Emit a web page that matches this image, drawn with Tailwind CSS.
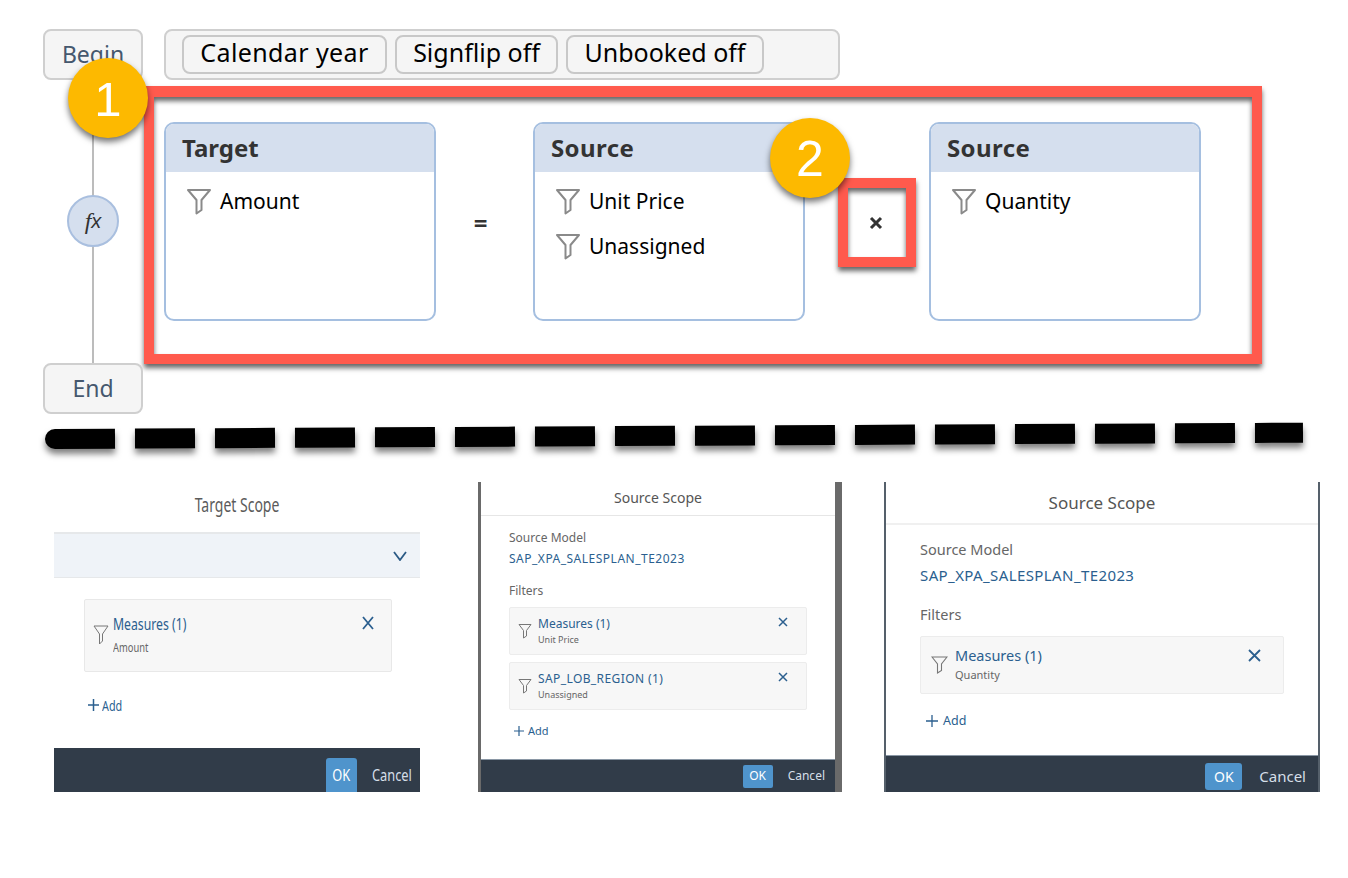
<!doctype html>
<html><head><meta charset="utf-8">
<script src="https://cdn.jsdelivr.net/npm/@tailwindcss/browser@4"></script>
</head>
<body class="m-0 bg-white">
<div class="relative w-[1348px] h-[878px] overflow-hidden bg-white font-['Noto_Sans','Open_Sans',sans-serif]">

  <!-- connector -->
  <div class="absolute left-[92px] top-[80px] w-[2px] h-[284px] bg-[#bcbcbc]"></div>
  <div class="absolute left-[67px] top-[195px] w-[52px] h-[52px] rounded-full border-2 border-[#a9bfdf] bg-[#d5dfee] flex items-center justify-center italic text-[#333]"><span class="font-['Liberation_Serif',serif] text-[24px]">f</span><span class="font-['Liberation_Sans',sans-serif] text-[20px]">x</span></div>

  <!-- top row -->
  <div class="relative flex pt-[29px] pl-[43px] gap-[21px]">
    <div class="w-[100px] h-[51px] rounded-[8px] border-2 border-[#cfcfcf] bg-[#f5f5f5] flex items-center justify-center text-[23px] text-[#45586e]">Begin</div>
    <div class="w-[676px] h-[51px] rounded-[8px] border-2 border-[#cfcfcf] bg-[#f5f5f5] flex items-center gap-[8px] pl-[16px] text-[25px] text-black">
      <div class="w-[205px] h-[39px] rounded-[8px] border-2 border-[#c8c8c8] flex items-center justify-center pb-[3px] tracking-[0.4px]">Calendar year</div>
      <div class="w-[163px] h-[39px] rounded-[8px] border-2 border-[#c8c8c8] flex items-center justify-center pb-[3px]">Signflip off</div>
      <div class="w-[198px] h-[39px] rounded-[8px] border-2 border-[#c8c8c8] flex items-center justify-center pb-[3px]">Unbooked off</div>
    </div>
  </div>

  <!-- red box with cards -->
  <div class="relative ml-[144px] mt-[6px] w-[1118px] h-[278px] border-[10px] border-t-[11px] border-[#ff5a4d] bg-white shadow-[0_4px_5px_rgba(0,0,0,0.6),inset_0_4px_5px_rgba(0,0,0,0.6)] flex pl-[10px] pt-[25px]">
    <div class="w-[272px] h-[199px] rounded-[10px] border-2 border-[#a5bfe0] overflow-hidden shrink-0">
      <div class="h-[48px] bg-[#d5dfee] pl-[16px] flex items-center text-[24px] font-bold text-[#333]">Target</div>
      <div class="flex items-center gap-[8px] pl-[20px] mt-[14px] h-[30px] text-[21px] text-black">
        <svg width="26" height="28" viewBox="0 0 26 28" fill="none" stroke="#8a8a8a" stroke-width="2" stroke-linejoin="round"><path d="M2 3h22l-8.500 10v10l-5 3.500V13z"/></svg>
        <span class="pt-[2px]">Amount</span>
      </div>
    </div>
    <div class="w-[97px] shrink-0 flex justify-center pt-[89px] pr-[8px] text-[24px] font-bold text-[#333] leading-none">=</div>
    <div class="w-[272px] h-[199px] rounded-[10px] border-2 border-[#a5bfe0] overflow-hidden shrink-0">
      <div class="h-[48px] bg-[#d5dfee] pl-[16px] flex items-center text-[24px] font-bold text-[#333] tracking-[0.4px]">Source</div>
      <div class="flex items-center gap-[8px] pl-[20px] mt-[14px] h-[30px] text-[21px] text-black">
        <svg width="26" height="28" viewBox="0 0 26 28" fill="none" stroke="#8a8a8a" stroke-width="2" stroke-linejoin="round"><path d="M2 3h22l-8.500 10v10l-5 3.500V13z"/></svg>
        <span class="pt-[2px]">Unit Price</span>
      </div>
      <div class="flex items-center gap-[8px] pl-[20px] mt-[15px] h-[30px] text-[21px] text-black">
        <svg width="26" height="28" viewBox="0 0 26 28" fill="none" stroke="#8a8a8a" stroke-width="2" stroke-linejoin="round"><path d="M2 3h22l-8.500 10v10l-5 3.500V13z"/></svg>
        <span class="pt-[2px]">Unassigned</span>
      </div>
    </div>
    <div class="w-[124px] shrink-0"></div>
    <div class="w-[272px] h-[199px] rounded-[10px] border-2 border-[#a5bfe0] overflow-hidden shrink-0">
      <div class="h-[48px] bg-[#d5dfee] pl-[16px] flex items-center text-[24px] font-bold text-[#333] tracking-[0.4px]">Source</div>
      <div class="flex items-center gap-[8px] pl-[20px] mt-[14px] h-[30px] text-[21px] text-black">
        <svg width="26" height="28" viewBox="0 0 26 28" fill="none" stroke="#8a8a8a" stroke-width="2" stroke-linejoin="round"><path d="M2 3h22l-8.500 10v10l-5 3.500V13z"/></svg>
        <span class="pt-[2px]">Quantity</span>
      </div>
    </div>
  </div>

  <!-- small red highlight around the multiply sign -->
  <div class="absolute left-[838px] top-[178px] w-[78px] h-[89px] border-[10px] border-[#ff5a4d] bg-white shadow-[0_4px_5px_rgba(0,0,0,0.6),inset_0_4px_5px_rgba(0,0,0,0.6)] flex items-center justify-center pr-[2px]">
    <svg width="14" height="14" viewBox="0 0 14 14" stroke="#333" stroke-width="3"><path d="M2 2l10 10M12 2L2 12"/></svg>
  </div>

  <!-- numbered badges -->
  <div class="absolute left-[68px] top-[58px] w-[80px] h-[80px] rounded-full bg-[#fdb900] text-white text-[49px] leading-none flex items-center justify-center font-['Liberation_Sans',sans-serif] shadow-[0_4px_6px_rgba(0,0,0,0.55)] pt-[3px]">1</div>
  <div class="absolute left-[770px] top-[118px] w-[80px] h-[80px] rounded-full bg-[#fdb900] text-white text-[50px] leading-none flex items-center justify-center font-['Liberation_Sans',sans-serif] shadow-[0_4px_6px_rgba(0,0,0,0.55)] pt-[2px]">2</div>

  <!-- End -->
  <div class="relative ml-[43px] -mt-[1px] w-[100px] h-[51px] rounded-[8px] border-2 border-[#cfcfcf] bg-[#f5f5f5] flex items-center justify-center text-[23px] text-[#45586e]">End</div>

  <!-- dashed divider -->
  <div class="ml-[45px] mt-[15px] flex gap-[20px] w-[1258px] rotate-[-0.29deg] origin-left [&>div]:h-[20px] [&>div]:bg-black [&>div]:shadow-[0_5px_6px_rgba(0,0,0,0.5)]">
    <div class="w-[70px] rounded-l-[10px]"></div>
    <div class="w-[60px]"></div><div class="w-[60px]"></div><div class="w-[60px]"></div><div class="w-[60px]"></div><div class="w-[60px]"></div><div class="w-[60px]"></div><div class="w-[60px]"></div><div class="w-[60px]"></div><div class="w-[60px]"></div><div class="w-[60px]"></div><div class="w-[60px]"></div><div class="w-[60px]"></div><div class="w-[60px]"></div><div class="w-[60px]"></div>
    <div class="w-[48px]"></div>
  </div>

  <!-- scope screenshots -->
  <div class="absolute left-[54px] top-[482px] flex">
    <!-- Target Scope -->
    <div class="w-[366px] h-[310px] flex flex-col shrink-0">
      <div class="h-[50px] flex items-center justify-center text-[#5b5b5b] text-[20px] scale-x-[0.7] pb-[4px]">Target Scope</div>
      <div class="h-[46px] bg-[#eff3f8] border-t-2 border-b border-[#e6e8ea] flex items-center justify-end pr-[13px]">
        <svg width="14" height="10" viewBox="0 0 14 10" fill="none" stroke="#2b5a85" stroke-width="1.8"><path d="M1 1l6 8 6-8"/></svg>
      </div>
      <div class="mt-[21px] ml-[30px] w-[308px] h-[73px] bg-[#f7f7f7] border border-[#e8e8e8] rounded-[2px] flex pl-[8px] pt-[13px]">
        <svg class="mt-[11px]" width="16" height="22" viewBox="0 0 16 22" fill="none" stroke="#777" stroke-width="1"><path d="M1 2h14l-5.500 8v7l-3 3V10z"/></svg>
        <div class="ml-[4px] flex-1 scale-x-[0.72] origin-left">
          <div class="text-[#2b5f8f] text-[17px] leading-[22px]">Measures (1)</div>
          <div class="text-[#666] text-[13px] leading-[18px] mt-[3px]">Amount</div>
        </div>
        <svg class="mr-[17px] mt-[3px]" width="12" height="14" viewBox="0 0 12 14" stroke="#2b5f8f" stroke-width="1.8"><path d="M1 1l10 12M11 1L1 13"/></svg>
      </div>
      <div class="mt-[22px] ml-[34px] flex items-center gap-[3px] h-[22px] text-[#2b5f8f]">
        <svg width="11" height="14" viewBox="0 0 11 14" stroke="#2b5f8f" stroke-width="1.5"><path d="M5.500 1v12M0 7h11"/></svg>
        <span class="text-[15px] scale-x-[0.72] origin-left">Add</span>
      </div>
      <div class="mt-auto h-[44px] bg-[#313c49] flex items-end justify-end pr-[8px]">
        <div class="w-[31px] h-[34px] rounded-t-[3px] bg-[#4f94cc] text-white text-[16px] flex items-center justify-center"><span class="scale-x-[0.8]">OK</span></div>
        <div class="w-[40px] ml-[15px] h-[34px] text-[#d6dfe8] text-[16px] flex items-center justify-center"><span class="scale-x-[0.8]">Cancel</span></div>
      </div>
    </div>

    <!-- Source Scope 1 -->
    <div class="ml-[58px] w-[364px] h-[310px] flex flex-col border-l-[3px] border-r-[7px] border-[#6a6a6a] shrink-0 bg-white">
      <div class="h-[34px] pb-[2px] border-b border-[#e6e6e6] flex items-center justify-center text-[#555] text-[14px]">Source Scope</div>
      <div class="pl-[28px] pt-[14px] text-[12px] leading-[16px] text-[#666]">Source Model</div>
      <div class="pl-[28px] pt-[5px] text-[12px] leading-[16px] text-[#2b5f8f] tracking-[0.5px]">SAP_XPA_SALESPLAN_TE2023</div>
      <div class="pl-[28px] pt-[16px] text-[12px] leading-[16px] text-[#666]">Filters</div>
      <div class="mt-[8px] ml-[28px] w-[298px] h-[48px] bg-[#f7f7f7] border border-[#ececec] rounded-[2px] flex pl-[8px] pt-[8px]">
        <svg class="mt-[7px]" width="14" height="16" viewBox="0 0 14 16" fill="none" stroke="#777" stroke-width="1"><path d="M1 1.500h12l-4.500 6v5.500l-3 2V7.500z"/></svg>
        <div class="ml-[6px] flex-1">
          <div class="text-[#2b5f8f] text-[12px] leading-[16px]">Measures (1)</div>
          <div class="text-[#666] text-[9px] leading-[12px] mt-[2px]">Unit Price</div>
        </div>
        <svg class="mr-[18px] mt-[1px]" width="10" height="10" viewBox="0 0 10 10" stroke="#2b5f8f" stroke-width="1.5"><path d="M1 1l8 8M9 1L1 9"/></svg>
      </div>
      <div class="mt-[7px] ml-[28px] w-[298px] h-[48px] bg-[#f7f7f7] border border-[#ececec] rounded-[2px] flex pl-[8px] pt-[8px]">
        <svg class="mt-[7px]" width="14" height="16" viewBox="0 0 14 16" fill="none" stroke="#777" stroke-width="1"><path d="M1 1.500h12l-4.500 6v5.500l-3 2V7.500z"/></svg>
        <div class="ml-[6px] flex-1">
          <div class="text-[#2b5f8f] text-[12px] leading-[16px] tracking-[0.4px]">SAP_LOB_REGION (1)</div>
          <div class="text-[#666] text-[9px] leading-[12px] mt-[2px]">Unassigned</div>
        </div>
        <svg class="mr-[18px] mt-[1px]" width="10" height="10" viewBox="0 0 10 10" stroke="#2b5f8f" stroke-width="1.5"><path d="M1 1l8 8M9 1L1 9"/></svg>
      </div>
      <div class="mt-[13px] ml-[33px] flex items-center gap-[4px] h-[16px] text-[11px] text-[#2b5f8f]">
        <svg width="10" height="10" viewBox="0 0 10 10" stroke="#2b5f8f" stroke-width="1.2"><path d="M5 0v10M0 5h10"/></svg>
        <span>Add</span>
      </div>
      <div class="mt-auto h-[33px] bg-[#313c49] border-t border-[#8a97a5] flex items-center justify-end pr-[10px]">
        <div class="w-[30px] h-[23px] rounded-[2px] bg-[#4f94cc] text-white text-[12px] flex items-center justify-center">OK</div>
        <div class="ml-[15px] text-[#d6dfe8] text-[12px]">Cancel</div>
      </div>
    </div>

    <!-- Source Scope 2 -->
    <div class="ml-[42px] w-[436px] h-[310px] flex flex-col border-x-2 border-[#55606b] shrink-0 bg-white">
      <div class="h-[43px] border-b-2 border-[#f0f0f0] flex items-center justify-center text-[#555] text-[17px]">Source Scope</div>
      <div class="pl-[34px] pt-[15px] text-[14.500px] leading-[18px] text-[#666]">Source Model</div>
      <div class="pl-[34px] pt-[8px] text-[15px] leading-[18px] text-[#2b5f8f] tracking-[0.4px]">SAP_XPA_SALESPLAN_TE2023</div>
      <div class="pl-[34px] pt-[21px] text-[14.500px] leading-[18px] text-[#666]">Filters</div>
      <div class="mt-[13px] ml-[34px] w-[364px] h-[58px] bg-[#f7f7f7] border border-[#ececec] rounded-[2px] flex pl-[10px] pt-[8px]">
        <svg class="mt-[10px]" width="17" height="19" viewBox="0 0 17 19" fill="none" stroke="#777" stroke-width="1.1"><path d="M1 2h15l-5.500 7v6.500l-4 2.500V9z"/></svg>
        <div class="ml-[7px] flex-1">
          <div class="text-[#2b5f8f] text-[14.500px] leading-[20px]">Measures (1)</div>
          <div class="text-[#666] text-[11px] leading-[14px] mt-[3px]">Quantity</div>
        </div>
        <svg class="mr-[22px] mt-[4px]" width="13" height="13" viewBox="0 0 13 13" stroke="#2b5f8f" stroke-width="1.8"><path d="M1 1l11 11M12 1L1 12"/></svg>
      </div>
      <div class="mt-[17px] ml-[40px] flex items-center gap-[5px] h-[20px] text-[12.500px] text-[#2b5f8f]">
        <svg width="12" height="12" viewBox="0 0 12 12" stroke="#2b5f8f" stroke-width="1.3"><path d="M6 0v12M0 6h12"/></svg>
        <span>Add</span>
      </div>
      <div class="mt-auto h-[37px] bg-[#313c49] border-t border-[#8a97a5] flex items-start justify-end pr-[12px] pt-[7px]">
        <div class="w-[37px] h-[27px] rounded-[3px] bg-[#4f94cc] text-white text-[14px] flex items-center justify-center">OK</div>
        <div class="ml-[17px] h-[27px] flex items-center text-[#d6dfe8] text-[15px]">Cancel</div>
      </div>
    </div>
  </div>
</div>
</body></html>
